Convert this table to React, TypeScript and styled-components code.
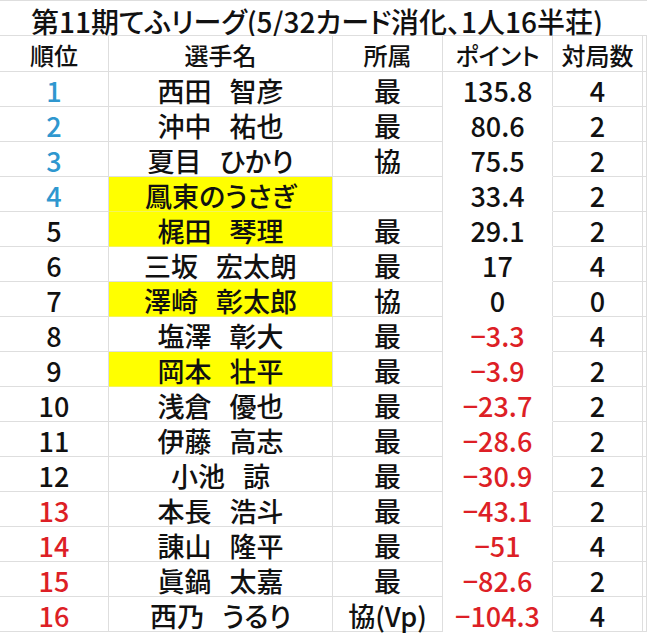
import React from 'react';
import styled, { createGlobalStyle } from 'styled-components';

const GlobalStyle = createGlobalStyle`
  html, body {
    margin: 0;
    padding: 0;
    background: #ffffff;
  }
  body {
    font-family: "Noto Sans CJK JP", "Noto Sans", sans-serif;
    font-feature-settings: "palt";
    font-weight: 500;
    color: #111111;
  }
`;

const ruleColor = '#dedede';

const Sheet = styled.div`
  width: 647px;
  height: 636px;
  overflow: hidden;
  background: #ffffff;
  border-top: 1px solid ${ruleColor};
  box-sizing: border-box;
`;

const TitleRow = styled.div`
  height: 35px;
  display: flex;
  align-items: center;
  padding: 5px 0 0 31px;
  box-sizing: border-box;
  font-size: 28px;
  line-height: 1;
  border-bottom: 1px solid ${ruleColor};
  white-space: nowrap;
`;

const Row = styled.div<{ $height: number }>`
  display: grid;
  grid-template-columns: 109px 224px 110px 110px 90px 1fr;
  height: ${(p) => p.$height}px;
`;

const Cell = styled.div<{
  $tone?: 'blue' | 'red' | 'black';
  $fill?: boolean;
  $plain?: boolean;
  $size?: number;
}>`
  display: flex;
  align-items: center;
  justify-content: center;
  box-sizing: border-box;
  white-space: nowrap;
  line-height: 1;
  font-size: ${(p) => p.$size ?? 27}px;
  color: ${(p) =>
    p.$tone === 'blue' ? '#2f97cf' : p.$tone === 'red' ? '#dd1f26' : '#111111'};
  background: ${(p) => (p.$fill ? '#ffff00' : '#ffffff')};
  border-right: 1px solid ${ruleColor};
  border-bottom: 1px solid
    ${(p) => (p.$plain ? '#ffffff' : p.$fill ? '#f4f45a' : ruleColor)};
  padding-top: 3px;
`;

const Name = styled.span`
  display: inline-flex;
  gap: 18px;
`;

type Player = {
  name: string;
  team: string;
  point: number;
  games: number;
  marked?: boolean;
};

const players: Player[] = [
  { name: '西田　智彦', team: '最', point: 135.8, games: 4 },
  { name: '沖中　祐也', team: '最', point: 80.6, games: 2 },
  { name: '夏目　ひかり', team: '協', point: 75.5, games: 2 },
  { name: '鳳東のうさぎ', team: '', point: 33.4, games: 2, marked: true },
  { name: '梶田　琴理', team: '最', point: 29.1, games: 2, marked: true },
  { name: '三坂　宏太朗', team: '最', point: 17, games: 4 },
  { name: '澤崎　彰太郎', team: '協', point: 0, games: 0, marked: true },
  { name: '塩澤　彰大', team: '最', point: -3.3, games: 4 },
  { name: '岡本　壮平', team: '最', point: -3.9, games: 2, marked: true },
  { name: '浅倉　優也', team: '最', point: -23.7, games: 2 },
  { name: '伊藤　高志', team: '最', point: -28.6, games: 2 },
  { name: '小池　諒', team: '最', point: -30.9, games: 2 },
  { name: '本長　浩斗', team: '最', point: -43.1, games: 2 },
  { name: '諌山　隆平', team: '最', point: -51, games: 4 },
  { name: '眞鍋　太嘉', team: '最', point: -82.6, games: 2 },
  { name: '西乃　うるり', team: '協(Vp)', point: -104.3, games: 4 },
];

const rankTone = (rank: number): 'blue' | 'red' | 'black' =>
  rank <= 4 ? 'blue' : rank >= 13 ? 'red' : 'black';

const showPoint = (v: number) => (v < 0 ? '−' + String(-v) : String(v));

export default function App() {
  return (
    <>
      <GlobalStyle />
      <Sheet>
        <TitleRow>第11期てふリーグ(5/32カード消化、1人16半荘)</TitleRow>
        <Row $height={36}>
          <Cell $size={24}>順位</Cell>
          <Cell $size={24}>選手名</Cell>
          <Cell $size={24}>所属</Cell>
          <Cell $size={24}>ポイント</Cell>
          <Cell $size={24}>対局数</Cell>
          <Cell />
        </Row>
        {players.map((p, i) => (
          <Row key={p.name} $height={35}>
            <Cell $tone={rankTone(i + 1)}>{i + 1}</Cell>
            <Cell $fill={p.marked}>
              <Name>
                {p.name.split('　').map((part) => (
                  <span key={part}>{part}</span>
                ))}
              </Name>
            </Cell>
            <Cell>{p.team}</Cell>
            <Cell $plain $tone={p.point < 0 ? 'red' : 'black'}>
              {showPoint(p.point)}
            </Cell>
            <Cell>{p.games}</Cell>
            <Cell />
          </Row>
        ))}
      </Sheet>
    </>
  );
}
